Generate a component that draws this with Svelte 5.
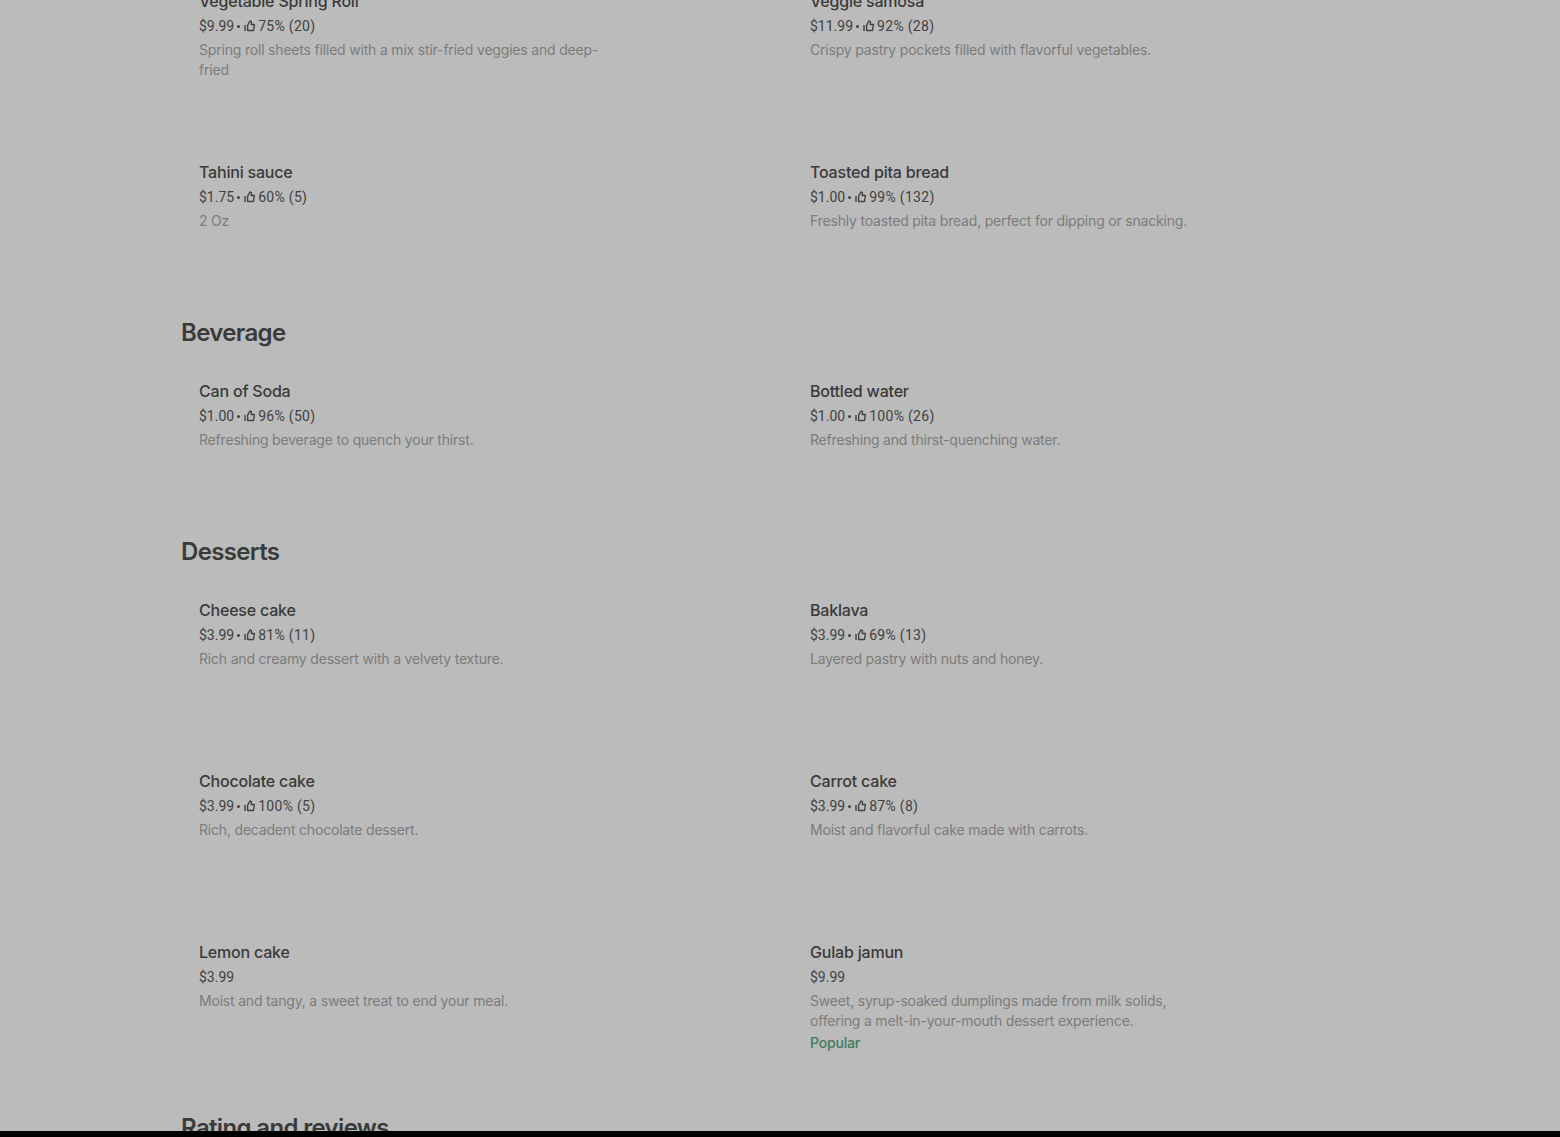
<script>
  const sections = [
    {
      title: '',
      items: [
        { name: 'Vegetable Spring Roll', price: '$9.99', rating: '75% (20)', desc: 'Spring roll sheets filled with a mix stir-fried veggies and deep-fried' },
        { name: 'Veggie samosa', price: '$11.99', rating: '92% (28)', desc: 'Crispy pastry pockets filled with flavorful vegetables.' },
        { name: 'Tahini sauce', price: '$1.75', rating: '60% (5)', desc: '2 Oz' },
        { name: 'Toasted pita bread', price: '$1.00', rating: '99% (132)', desc: 'Freshly toasted pita bread, perfect for dipping or snacking.' }
      ]
    },
    {
      title: 'Beverage',
      items: [
        { name: 'Can of Soda', price: '$1.00', rating: '96% (50)', desc: 'Refreshing beverage to quench your thirst.' },
        { name: 'Bottled water', price: '$1.00', rating: '100% (26)', desc: 'Refreshing and thirst-quenching water.' }
      ]
    },
    {
      title: 'Desserts',
      items: [
        { name: 'Cheese cake', price: '$3.99', rating: '81% (11)', desc: 'Rich and creamy dessert with a velvety texture.' },
        { name: 'Baklava', price: '$3.99', rating: '69% (13)', desc: 'Layered pastry with nuts and honey.' },
        { name: 'Chocolate cake', price: '$3.99', rating: '100% (5)', desc: 'Rich, decadent chocolate dessert.' },
        { name: 'Carrot cake', price: '$3.99', rating: '87% (8)', desc: 'Moist and flavorful cake made with carrots.' },
        { name: 'Lemon cake', price: '$3.99', desc: 'Moist and tangy, a sweet treat to end your meal.' },
        { name: 'Gulab jamun', price: '$9.99', desc: 'Sweet, syrup-soaked dumplings made from milk solids, offering a melt-in-your-mouth dessert experience.', badge: 'Popular' }
      ]
    }
  ];
</script>

<div class="page">
  <main class="content">
    {#each sections as section}
      {#if section.title}
        <h2 class="section-title">{section.title}</h2>
      {/if}
      <div class="grid">
        {#each section.items as item}
          <article class="card">
            <h3 class="name">{item.name}</h3>
            <div class="meta">
              <span>{item.price}</span>
              {#if item.rating}
                <span class="dot"></span>
                <svg class="thumb" width="12" height="12" viewBox="0 0 12 12" fill="none" stroke="currentColor" stroke-width="1.4">
                  <path d="M1 5v6" />
                  <path d="M3.6 5.2 6 1c1 0 1.6.7 1.5 1.7L7.2 4.5h3.2l-.9 6H3.6z" stroke-linejoin="round" />
                </svg>
                <span class="rating">{item.rating}</span>
              {/if}
            </div>
            <p class="desc">{item.desc}</p>
            {#if item.badge}
              <div class="badge">{item.badge}</div>
            {/if}
          </article>
        {/each}
      </div>
    {/each}
    <h2 class="section-title reviews">Rating and reviews</h2>
  </main>
</div>

<style>
  :global(body) {
    background: #000;
  }

  .page {
    height: 1131px;
    overflow: hidden;
    background: #bbbbbb;
    font-family: Inter, "Liberation Sans", sans-serif;
  }

  .content {
    width: 1199px;
    margin: -25px 0 0 181px;
  }

  .grid {
    display: grid;
    grid-template-columns: 589px 583px;
    column-gap: 27px;
    row-gap: 25px;
  }

  .section-title {
    margin: 25px 0 16px;
    font-size: 24px;
    line-height: 32px;
    font-weight: 600;
    letter-spacing: -0.65px;
    color: #3a3a3a;
  }

  .reviews {
    margin-top: 40px;
  }

  .card {
    box-sizing: border-box;
    height: 146px;
    padding: 15px 16px 0 17px;
    border: 1px solid #b8b8b8;
    border-radius: 12px;
  }

  .card:nth-child(even) {
    padding-left: 12px;
  }

  .name {
    margin: 0;
    font-size: 16px;
    line-height: 20px;
    font-weight: 500;
    letter-spacing: -0.2px;
    color: #3a3a3a;
  }

  .meta {
    display: flex;
    align-items: center;
    gap: 3px;
    margin-top: 5px;
    font-family: Roboto, sans-serif;
    font-size: 14px;
    line-height: 20px;
    color: #424242;
  }

  .rating {
    margin-left: -1px;
    letter-spacing: 0.3px;
  }

  .dot {
    flex: none;
    width: 3px;
    height: 3px;
    margin-right: 1px;
    border-radius: 50%;
    background: currentColor;
  }

  .thumb {
    flex: none;
  }

  .desc {
    max-width: 405px;
    margin: 4px 0 0;
    font-size: 14px;
    line-height: 20px;
    letter-spacing: -0.19px;
    color: #7c7c7c;
  }

  .badge {
    margin-top: 2px;
    font-size: 14px;
    line-height: 20px;
    font-weight: 500;
    letter-spacing: -0.2px;
    color: #3f7a60;
  }
</style>
